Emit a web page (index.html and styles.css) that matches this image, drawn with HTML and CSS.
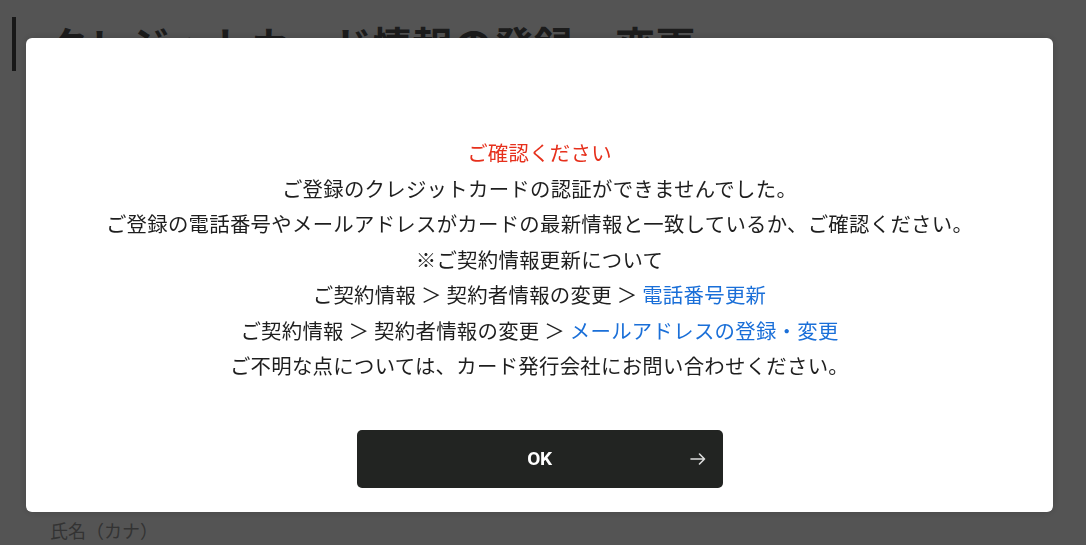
FILE: index.html
```html
<!DOCTYPE html>
<html lang="ja">
<head>
<meta charset="utf-8">
<title>クレジットカード情報の登録・変更</title>
<link rel="stylesheet" href="styles.css">
</head>
<body>
<main class="page">
  <h1 class="page-title">クレジットカード情報の登録・変更</h1>
  <div class="form-body"></div>
  <div class="field-label">氏名（カナ）</div>
</main>

<div class="overlay">
  <div class="modal" role="dialog">
    <div class="message">
      <p class="line alert">ご確認ください</p>
      <p class="line">ご登録のクレジットカードの認証ができませんでした。</p>
      <p class="line">ご登録の電話番号やメールアドレスがカードの最新情報と一致しているか、ご確認ください。</p>
      <p class="line">※ご契約情報更新について</p>
      <p class="line">ご契約情報 ＞ 契約者情報の変更 ＞ <a class="link" href="#">電話番号更新</a></p>
      <p class="line">ご契約情報 ＞ 契約者情報の変更 ＞ <a class="link" href="#">メールアドレスの登録・変更</a></p>
      <p class="line">ご不明な点については、カード発行会社にお問い合わせください。</p>
    </div>
    <button class="ok-button" type="button">
      <span class="ok-label">OK</span>
      <svg class="ok-arrow" width="16" height="12" viewBox="0 0 16 12" aria-hidden="true">
        <path d="M1 6H14.5M9.5 1L14.5 6L9.5 11" fill="none" stroke="#dcdcdc" stroke-width="1.6" stroke-linecap="round" stroke-linejoin="round"/>
      </svg>
    </button>
  </div>
</div>
</body>
</html>
```

FILE: styles.css
```css
* {
  box-sizing: border-box;
}

html, body {
  margin: 0;
  padding: 0;
  background: #ffffff;
}

body {
  font-family: "Noto Sans CJK JP", "Noto Sans", sans-serif;
  color: #222222;
  width: 1086px;
  height: 545px;
  overflow: hidden;
}

.page {
  padding: 17px 0 0 12px;
}

.page-title {
  margin: 0;
  border-left: 4px solid #4a4a4a;
  padding-left: 32px;
  font-size: 40px;
  line-height: 54px;
  font-weight: 700;
  letter-spacing: 0.5px;
  color: #555555;
}

.form-body {
  height: 446px;
}

.field-label {
  padding-left: 38px;
  font-size: 18px;
  line-height: 26px;
  color: #9a9a9a;
}

.overlay {
  position: fixed;
  inset: 0;
  background: rgba(0, 0, 0, 0.67);
  padding: 38px 0 0 26px;
}

.modal {
  width: 1027px;
  height: 474px;
  background: #ffffff;
  border-radius: 6px;
  box-shadow: 0 0 10px rgba(0, 0, 0, 0.18);
  padding-top: 97px;
  display: flex;
  flex-direction: column;
  align-items: center;
}

.message {
  text-align: center;
  font-size: 20.4px;
  line-height: 35.5px;
  letter-spacing: 0.28px;
  color: #1e1e1e;
}

.line {
  margin: 0;
}

.alert {
  color: #e6301c;
}

.link {
  color: #1a6fd8;
  text-decoration: none;
}

.ok-button {
  margin-top: 46px;
  width: 366px;
  height: 58px;
  border: none;
  border-radius: 5px;
  background: #222422;
  color: #ffffff;
  display: grid;
  grid-template-columns: 1fr auto 1fr;
  align-items: center;
  padding: 0 17px;
  font-family: Roboto, "Noto Sans", sans-serif;
  cursor: pointer;
}

.ok-label {
  grid-column: 2;
  font-size: 19px;
  font-weight: 700;
  letter-spacing: -0.3px;
}

.ok-arrow {
  grid-column: 3;
  justify-self: end;
  display: block;
}
```
